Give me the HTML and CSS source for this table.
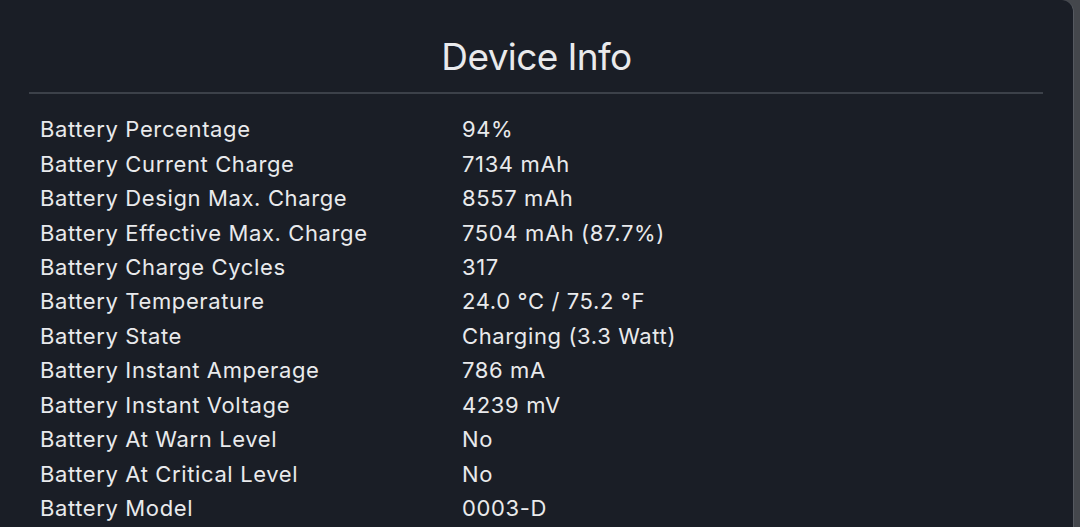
FILE: index.html
```html
<!DOCTYPE html>
<html>
<head>
<meta charset="utf-8">
<link rel="stylesheet" href="styles.css">
</head>
<body>
<div class="panel">
  <h1 class="title">Device Info</h1>
  <div class="rule"></div>
  <div class="rows">
    <div class="row"><span class="label">Battery Percentage</span><span class="value">94%</span></div>
    <div class="row"><span class="label">Battery Current Charge</span><span class="value">7134 mAh</span></div>
    <div class="row"><span class="label">Battery Design Max. Charge</span><span class="value">8557 mAh</span></div>
    <div class="row"><span class="label">Battery Effective Max. Charge</span><span class="value">7504 mAh (87.7%)</span></div>
    <div class="row"><span class="label">Battery Charge Cycles</span><span class="value">317</span></div>
    <div class="row"><span class="label">Battery Temperature</span><span class="value">24.0 °C / 75.2 °F</span></div>
    <div class="row"><span class="label">Battery State</span><span class="value">Charging (3.3 Watt)</span></div>
    <div class="row"><span class="label">Battery Instant Amperage</span><span class="value">786 mA</span></div>
    <div class="row"><span class="label">Battery Instant Voltage</span><span class="value">4239 mV</span></div>
    <div class="row"><span class="label">Battery At Warn Level</span><span class="value">No</span></div>
    <div class="row"><span class="label">Battery At Critical Level</span><span class="value">No</span></div>
    <div class="row"><span class="label">Battery Model</span><span class="value">0003-D</span></div>
  </div>
</div>
</body>
</html>
```

FILE: styles.css
```css
html, body {
  margin: 0;
  padding: 0;
  height: 100%;
  overflow: hidden;
}
body {
  background: #44474c;
  font-family: Inter, "Noto Sans", "Liberation Sans", sans-serif;
  color: #e9eaec;
}
.panel {
  width: 1073px;
  height: 100%;
  background: #1a1e26;
  border-right: 1px solid #555960;
  border-top-right-radius: 12px;
  box-sizing: content-box;
  padding-top: 1px;
}
.title {
  margin: 34px 0 0;
  font-size: 37px;
  font-weight: 400;
  line-height: 44px;
  text-align: center;
  letter-spacing: -0.6px;
}
.rule {
  margin: 13px 30px 0 29px;
  height: 2px;
  background: #3c4149;
}
.rows {
  padding: 18px 0 0 40px;
  display: flex;
  flex-direction: column;
}
.row {
  display: flex;
  height: 34.45px;
  align-items: center;
  font-size: 22px;
  letter-spacing: 0.62px;
}
.label {
  width: 422px;
  flex: none;
}
```
